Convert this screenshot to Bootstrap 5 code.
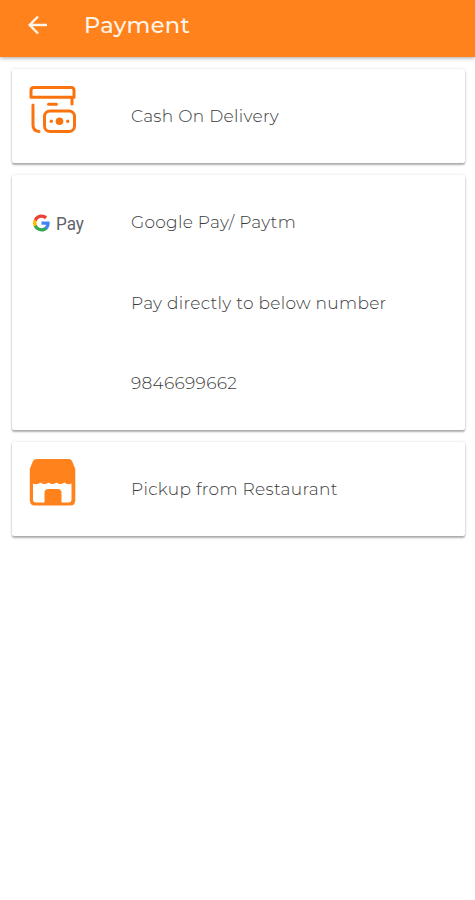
<!DOCTYPE html>
<html lang="en">
<head>
<meta charset="utf-8">
<meta name="viewport" content="width=device-width, initial-scale=1">
<title>Payment</title>
<link href="https://cdn.jsdelivr.net/npm/bootstrap@5.3.0/dist/css/bootstrap.min.css" rel="stylesheet">
<style>
body{font-family:Montserrat,Inter,"Open Sans",sans-serif;background:#fff;color:#3c3c3c}
.app-bar{height:56.5px;background:#ff821c;box-shadow:0 1px 4px rgba(0,0,0,.35);padding:0 28px;position:relative}
.app-title{font-size:22.5px;font-weight:500;line-height:28px;margin:-7px 0 0 36px;letter-spacing:.35px;color:#fff4e8}
.back-link{line-height:0;margin-top:-7px}
.pay-list{padding:12.5px 10px 24px 12px;gap:12px}
.pay-card{border:0;border-radius:2px;box-shadow:0 2px 2px rgba(0,0,0,.3),0 0 3px rgba(0,0,0,.13);min-height:94px}
.pay-icon{width:119px;padding-left:17px;padding-top:17px;line-height:0}
.pay-line{height:80.5px;padding-top:35px;line-height:24px;font-size:17px;font-weight:300;white-space:nowrap;letter-spacing:.3px}
.pay-line:last-child{height:94.4px}
.pay-line:only-child{height:94px;padding-top:34.8px}
.gpay{padding-left:21px;padding-top:38px}
.gpay-word{font:400 18px/22px Roboto,sans-serif;color:#5f6368;margin-left:6px;transform:scaleX(.95);transform-origin:left}
</style>
<script src="https://cdn.jsdelivr.net/npm/bootstrap@5.3.0/dist/js/bootstrap.bundle.min.js"></script>
</head>
<body class="min-vh-100">
<header class="app-bar d-flex align-items-center">
  <a class="back-link" href="#" aria-label="Back"><svg width="20" height="20" viewBox="0 0 20 20" fill="none" stroke="#fff4e8" stroke-width="2.4"><path d="M19 10H2.500M10 1.500 1.700 10l8.300 8.500"/></svg></a>
  <h1 class="app-title">Payment</h1>
</header>
<main class="pay-list d-flex flex-column">
  <section class="card pay-card flex-row">
    <div class="pay-icon"><svg width="48" height="48" viewBox="0 0 48 48" fill="none" stroke="#f9740f" stroke-width="3" stroke-linecap="round" stroke-linejoin="round"><path d="M4.500 1.500h38q2.500 0 2.500 3v6.800H2V4.500q0-3 2.500-3zM43 12v6M4 19v20q0 6 6 6.500M19.500 18.300h8"/><rect x="15.500" y="25" width="30" height="20.500" rx="5.500"/><g fill="#f9740f" stroke="none"><circle cx="30.500" cy="35.200" r="3.800"/><circle cx="22.300" cy="35.200" r="1.700"/><circle cx="38.700" cy="35.200" r="1.700"/></g></svg></div>
    <div><div class="pay-line">Cash On Delivery</div></div>
  </section>
  <section class="card pay-card flex-row">
    <div class="pay-icon gpay d-flex align-items-start"><svg width="17" height="20" viewBox="0 -1 48 50" fill="none"><path fill="#4285f4" d="M47 24.500c0-1.600-.1-3.100-.4-4.500H24v9h13c-.6 3-2.300 5.500-4.800 7.200v6h7.700c4.500-4.200 7.100-10.300 7.100-17.700z"/><path fill="#34a853" d="M24 48c6.500 0 11.900-2.100 15.900-5.800l-7.700-6C30 37.600 27.300 38.500 24 38.500c-6.200 0-11.500-4.200-13.400-9.900h-8v6.200C6.600 42.600 14.700 48 24 48z"/><path fill="#fbbc05" d="M10.600 28.600a14.400 14.400 0 0 1 0-9.200v-6.200h-8a24 24 0 0 0 0 21.600z"/><path fill="#ea4335" d="M24 9.500c3.500 0 6.700 1.200 9.200 3.600l6.900-6.900C35.900 2.400 30.500 0 24 0 14.700 0 6.600 5.400 2.600 13.200l8 6.200C12.500 13.700 17.800 9.500 24 9.500z"/></svg><span class="gpay-word">Pay</span></div>
    <div>
      <div class="pay-line">Google Pay/ Paytm</div>
      <div class="pay-line">Pay directly to below number</div>
      <div class="pay-line">9846699662</div>
    </div>
  </section>
  <section class="card pay-card flex-row">
    <div class="pay-icon"><svg width="48" height="48" viewBox="0 0 48 48"><path fill="#ff821c" d="M8 0h32q2 0 3 2l3.300 8v31q0 5.500-5 5.500H5.800q-5 0-5-5.500V10L4 2q1-2 4-2z"/><path fill="#fff" d="M4 24.500q4 2 7.500-1 4 3 8 0 4 3 8 0 4 3 8 0 3 3 7 1v16q0 3-3 3h-7V34q0-4-4-4h-9q-4 0-4 4v9.500H7q-3 0-3-3z"/></svg></div>
    <div><div class="pay-line">Pickup from Restaurant</div></div>
  </section>
</main>
</body>
</html>
